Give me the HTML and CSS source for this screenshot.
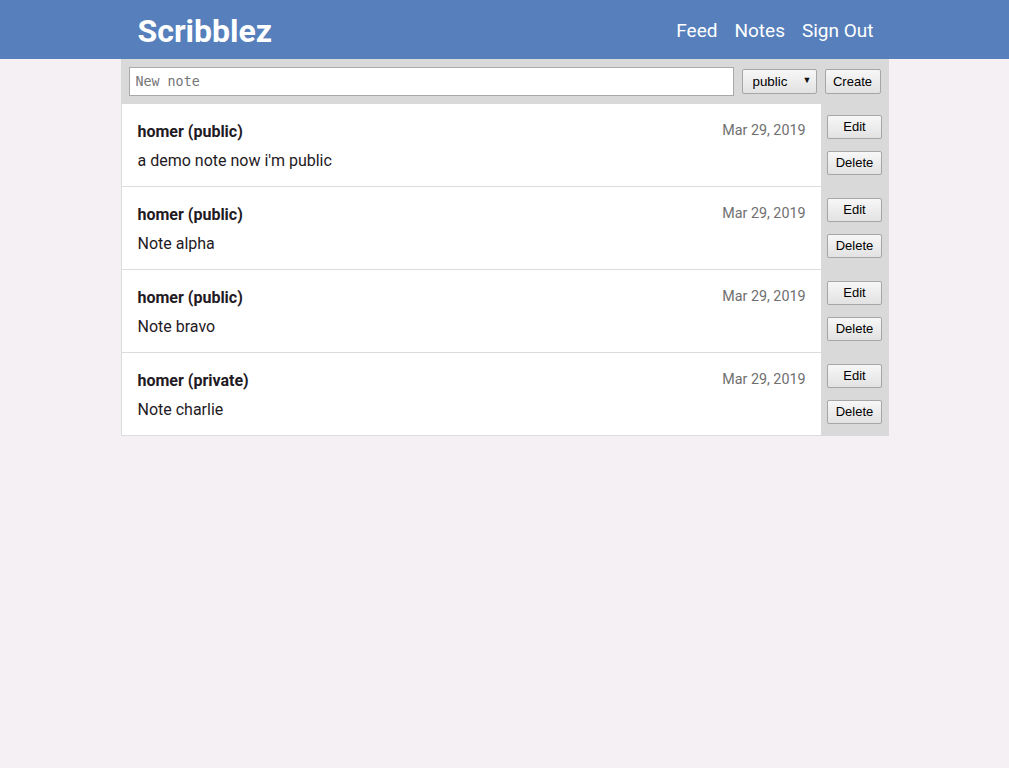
FILE: index.html
```html
<!DOCTYPE html>
<html lang="en">
<head>
<meta charset="utf-8">
<title>Scribblez</title>
<link rel="stylesheet" href="styles.css">
</head>
<body>
<header class="topbar">
  <div class="topbar-inner">
    <a class="brand" href="#">Scribblez</a>
    <nav class="nav">
      <a href="#">Feed</a>
      <a href="#">Notes</a>
      <a href="#">Sign Out</a>
    </nav>
  </div>
</header>
<main class="container">
  <form class="composer">
    <input class="note-input" type="text" placeholder="New note">
    <span class="select-wrap">
      <select class="visibility">
        <option>public</option>
        <option>private</option>
      </select>
    </span>
    <button class="btn btn-create" type="button">Create</button>
  </form>
  <ul class="notes">
    <li class="note-row">
      <article class="note">
        <div class="note-head">
          <span class="note-author">homer (public)</span>
          <span class="note-date">Mar 29, 2019</span>
        </div>
        <p class="note-body">a demo note now i'm public</p>
      </article>
      <div class="note-actions">
        <button class="btn" type="button">Edit</button>
        <button class="btn" type="button">Delete</button>
      </div>
    </li>
    <li class="note-row">
      <article class="note">
        <div class="note-head">
          <span class="note-author">homer (public)</span>
          <span class="note-date">Mar 29, 2019</span>
        </div>
        <p class="note-body">Note alpha</p>
      </article>
      <div class="note-actions">
        <button class="btn" type="button">Edit</button>
        <button class="btn" type="button">Delete</button>
      </div>
    </li>
    <li class="note-row">
      <article class="note">
        <div class="note-head">
          <span class="note-author">homer (public)</span>
          <span class="note-date">Mar 29, 2019</span>
        </div>
        <p class="note-body">Note bravo</p>
      </article>
      <div class="note-actions">
        <button class="btn" type="button">Edit</button>
        <button class="btn" type="button">Delete</button>
      </div>
    </li>
    <li class="note-row">
      <article class="note">
        <div class="note-head">
          <span class="note-author">homer (private)</span>
          <span class="note-date">Mar 29, 2019</span>
        </div>
        <p class="note-body">Note charlie</p>
      </article>
      <div class="note-actions">
        <button class="btn" type="button">Edit</button>
        <button class="btn" type="button">Delete</button>
      </div>
    </li>
  </ul>
</main>
</body>
</html>
```

FILE: styles.css
```css
* { box-sizing: border-box; }

body {
  margin: 0;
  background: #f5f0f4;
  font-family: Roboto, "Noto Sans", sans-serif;
  color: #222;
}

.topbar {
  background: #567fbb;
  height: 59px;
}

.topbar-inner {
  width: 768px;
  margin: 0 auto;
  height: 100%;
  padding: 0 15px 0 16px;
  display: flex;
  align-items: center;
  justify-content: space-between;
}

.brand {
  color: #fff;
  text-decoration: none;
  font-weight: 700;
  font-size: 32px;
  padding-left: 1px;
  padding-top: 2px;
}

.nav {
  display: flex;
  gap: 17px;
  padding-top: 2px;
}

.nav a {
  color: #fff;
  text-decoration: none;
  font-size: 19px;
}

.container {
  width: 768px;
  margin: 0 auto;
  background: #d9d9d9;
}

.composer {
  display: flex;
  align-items: center;
  gap: 8px;
  padding: 8px;
  margin: 0;
}

.note-input {
  flex: 1;
  height: 29px;
  border: 1px solid #a9a9a9;
  background: #fff;
  padding: 0 6px;
  font-family: "DejaVu Sans Mono", monospace;
  font-size: 13.33px;
  color: #333;
}

.note-input::placeholder { color: #757575; }

.select-wrap {
  position: relative;
  display: inline-block;
}

.select-wrap::after {
  content: "\25BC";
  position: absolute;
  right: 5px;
  top: 6px;
  font-size: 9px;
  color: #111;
  pointer-events: none;
}

.visibility {
  appearance: none;
  -webkit-appearance: none;
  width: 75px;
  height: 25px;
  border: 1px solid #a6a6a6;
  border-radius: 2px;
  background: linear-gradient(#f7f7f7, #e2e2e2);
  font-family: "Liberation Sans", Arial, sans-serif;
  font-size: 13.33px;
  color: #000;
  padding: 0 0 0 10px;
  margin: 0;
}

.btn {
  font-family: "Liberation Sans", Arial, sans-serif;
  font-size: 13px;
  color: #000;
  line-height: 16px;
  border: 1px solid #a6a6a6;
  border-radius: 2px;
  background: linear-gradient(#f7f7f7, #e2e2e2);
  padding: 3px 6px;
  margin: 0;
}

.btn-create {
  height: 25px;
  width: 56px;
  padding: 0;
}

.notes {
  list-style: none;
  margin: 0;
  padding: 0;
}

.note-row {
  display: flex;
  height: 83px;
}

.note {
  width: 700px;
  background: #fff;
  border-left: 1px solid #dcdcdc;
  border-bottom: 1px solid #dcdcdc;
  padding: 17px 15px 14px 16px;
}

.note-head {
  display: flex;
  justify-content: space-between;
  align-items: flex-start;
  line-height: 22px;
}

.note-author {
  font-weight: 700;
  font-size: 16px;
  color: #1f1a24;
}

.note-date {
  font-size: 14.3px;
  line-height: 18px;
  color: #6f6f6f;
}

.note-body {
  margin: 7px 0 0;
  font-size: 16px;
  line-height: 22px;
  color: #1f1a24;
}

.note-actions {
  flex: 1;
  display: flex;
  flex-direction: column;
  align-items: center;
  justify-content: center;
  gap: 12px;
  padding-bottom: 1px;
}

.note-actions .btn {
  width: 55px;
  height: 24px;
}
```
